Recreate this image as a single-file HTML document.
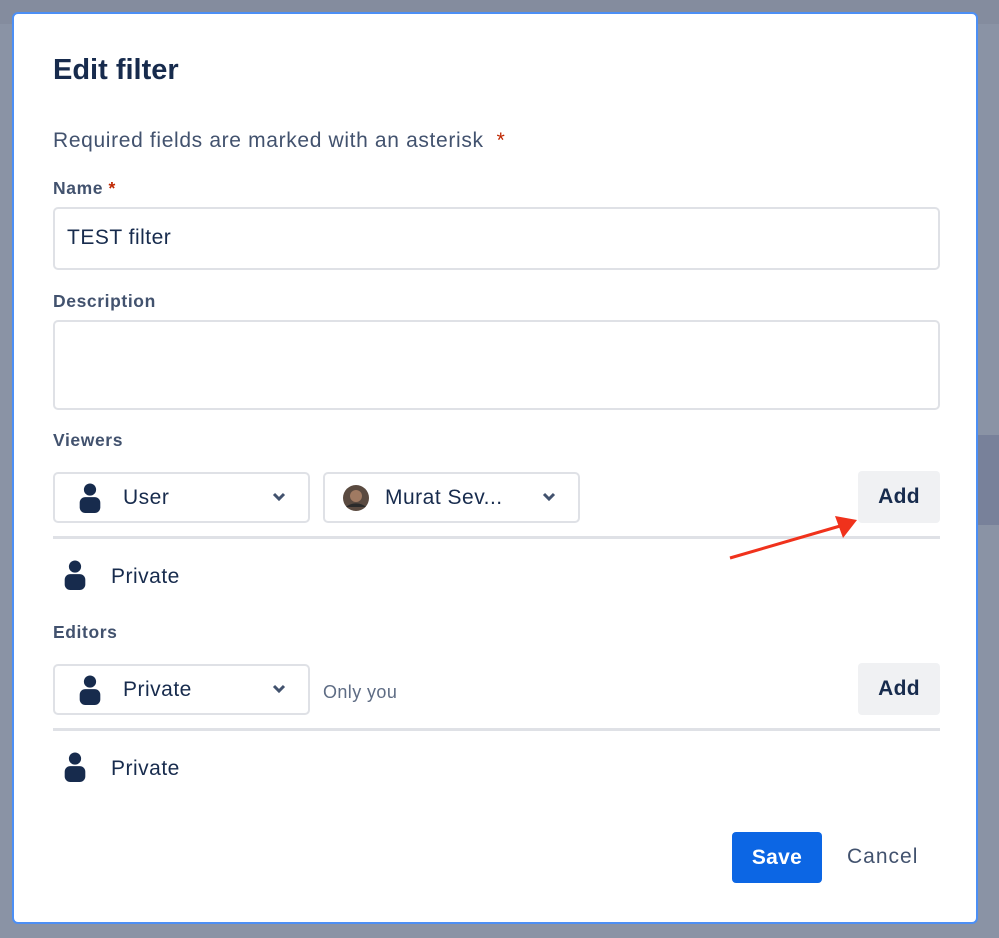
<!DOCTYPE html>
<html><head><style>
body{margin:0;width:999px;height:938px;background:#8a93a5;position:relative;overflow:hidden;font-family:"Liberation Sans",sans-serif;color:#172b4d}
.a{position:absolute}
.modal{left:12px;top:12px;width:966px;height:912px;background:#fff;border:2px solid #4c8ff5;border-radius:6px;box-sizing:border-box}
.lbl{font-size:17.5px;font-weight:bold;color:#42526e;letter-spacing:0.6px}
.inp{border:2px solid #dfe1e6;border-radius:5px;box-sizing:border-box;background:#fff}
.sel{border:2px solid #dfe1e6;border-radius:5px;box-sizing:border-box;font-size:21px;display:flex;align-items:center;letter-spacing:0.5px}
.btn{background:#f0f1f3;border-radius:4px;font-size:21px;font-weight:bold;display:flex;align-items:center;justify-content:center;color:#172b4d;letter-spacing:0.3px}
.hr{height:3px;background:#dfe1e6}
.chev{position:absolute;right:22px;top:18px}
.t{font-size:21px;letter-spacing:0.5px}
</style></head><body>
<div class="a" style="left:0;top:0;width:999px;height:24px;background:#848c9e"></div>
<div class="a" style="left:978px;top:435px;width:21px;height:90px;background:#78819a"></div>
<div class="a modal"></div>
<div class="a" style="left:53px;top:54px;font-size:29px;font-weight:bold">Edit filter</div>
<div class="a" style="left:53px;top:129px;font-size:21px;color:#42526e;letter-spacing:0.65px">Required fields are marked with an asterisk <span style="color:#bf2600">&nbsp;*</span></div>
<div class="a lbl" style="left:53px;top:178px">Name<span style="color:#bf2600"> *</span></div>
<div class="a inp" style="left:53px;top:207px;width:887px;height:63px"></div>
<div class="a t" style="left:67px;top:226px">TEST filter</div>
<div class="a lbl" style="left:53px;top:291px">Description</div>
<div class="a inp" style="left:53px;top:320px;width:887px;height:90px"></div>
<div class="a lbl" style="left:53px;top:430px">Viewers</div>

<svg width="0" height="0" style="position:absolute"><defs>
<symbol id="u" viewBox="0 0 22 32"><circle cx="11" cy="7" r="6.5" fill="#172b4d"/><rect x="0" y="15" width="22" height="17" rx="6" fill="#172b4d"/></symbol>
<symbol id="c" viewBox="0 0 14 10"><path d="M2 2l5 5 5-5" stroke="#42526e" stroke-width="3" fill="none"/></symbol>
</defs></svg>

<div class="a sel" style="left:53px;top:472px;width:257px;height:51px"><svg style="margin-left:24px" width="22" height="30"><use href="#u"/></svg><span style="margin-left:22px">User</span><svg class="chev" width="14" height="10"><use href="#c"/></svg></div>
<div class="a sel" style="left:323px;top:472px;width:257px;height:51px"><svg style="margin-left:18px" width="26" height="26"><circle cx="13" cy="13" r="13" fill="#5a4a40"/><circle cx="13" cy="11" r="6" fill="#a07a62"/><path d="M3 22a12 8 0 0 1 20 0" fill="#2a2a2a"/></svg><span style="margin-left:16px">Murat Sev...</span><svg class="chev" width="14" height="10"><use href="#c"/></svg></div>
<div class="a btn" style="left:858px;top:471px;width:82px;height:52px">Add</div>
<div class="a hr" style="left:53px;top:536px;width:887px"></div>
<svg class="a" style="left:64px;top:560px" width="22" height="30"><use href="#u"/></svg>
<div class="a t" style="left:111px;top:565px">Private</div>

<svg class="a" style="left:727px;top:508px" width="135" height="55"><path d="M3 50L120 16" stroke="#f0321c" stroke-width="3"/><path d="M130 12L108 8 116 30z" fill="#f0321c"/></svg>

<div class="a lbl" style="left:53px;top:622px">Editors</div>
<div class="a sel" style="left:53px;top:664px;width:257px;height:51px"><svg style="margin-left:24px" width="22" height="30"><use href="#u"/></svg><span style="margin-left:22px">Private</span><svg class="chev" width="14" height="10"><use href="#c"/></svg></div>
<div class="a" style="left:323px;top:682px;font-size:18px;color:#5e6c84;letter-spacing:0.4px">Only you</div>
<div class="a btn" style="left:858px;top:663px;width:82px;height:52px">Add</div>
<div class="a hr" style="left:53px;top:728px;width:887px"></div>
<svg class="a" style="left:64px;top:752px" width="22" height="30"><use href="#u"/></svg>
<div class="a t" style="left:111px;top:757px">Private</div>

<div class="a btn" style="left:732px;top:832px;width:90px;height:51px;background:#0c66e4;color:#fff">Save</div>
<div class="a t" style="left:847px;top:845px;color:#42526e;letter-spacing:1px">Cancel</div>
</body></html>
